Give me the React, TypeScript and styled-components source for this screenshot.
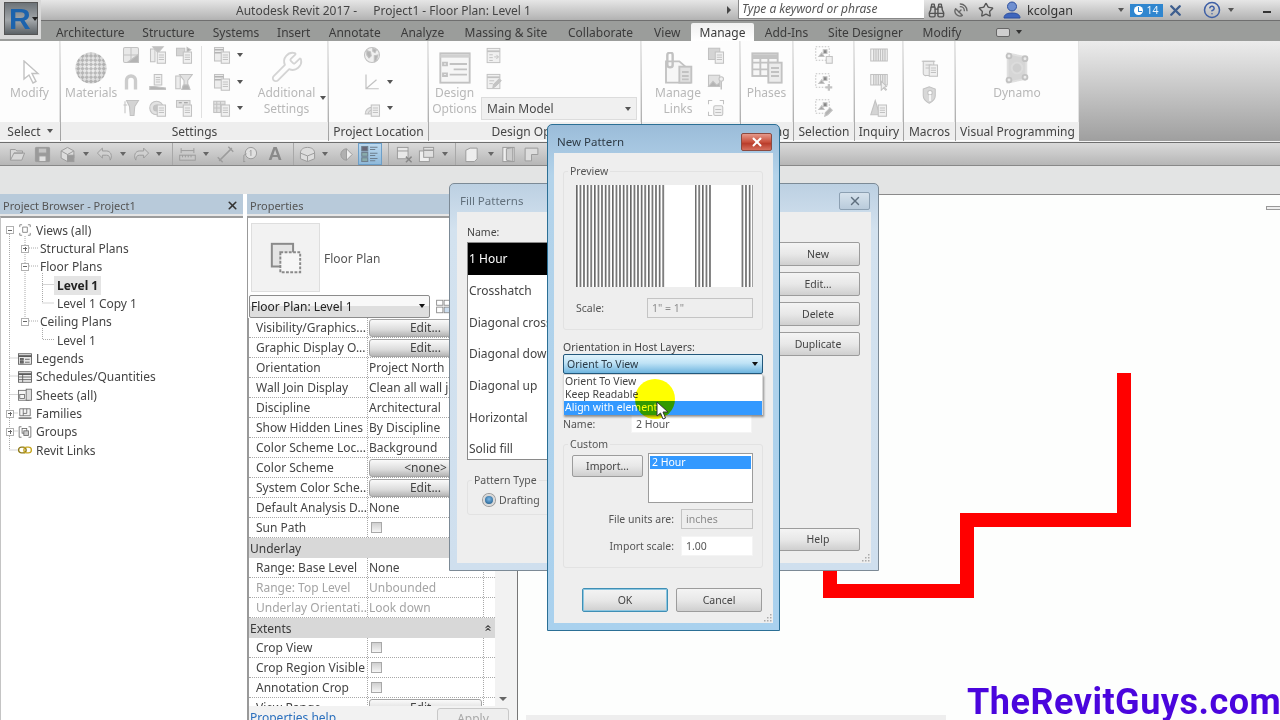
import React from 'react';
import styled, { createGlobalStyle } from 'styled-components';
import { Binoculars, ChevronsUp, CircleHelp, SatelliteDish, Star, Wrench, X } from 'lucide-react';

const GlobalStyle = createGlobalStyle`
  html, body { margin: 0; height: 100%; overflow: hidden; background: #fff; }
  body { font-family: "Noto Sans", "Open Sans", sans-serif; font-size: 12px; color: #3a3a3a; }
  * { box-sizing: border-box; }
`;

const Page = styled.div`
  position: relative;
  width: 1280px;
  height: 720px;
  display: flex;
  flex-direction: column;
  overflow: hidden;
`;

/* ---------- icons ---------- */

const GlyphSvg = styled.svg<{ $s: number; $c: string }>`
  width: ${(p) => p.$s}px;
  height: ${(p) => p.$s}px;
  flex: none;
  fill: none;
  stroke: ${(p) => p.$c};
  stroke-width: 1.4;
`;

const docMark = (
  <g>
    <rect x="11" y="8" width="11" height="15" fill="#f0f0f0" />
    <path d="M13 12h7M13 15h7M13 18h7" />
  </g>
);

const glyphs: Record<string, React.ReactNode> = {
  cursor: <path d="M6 1v18l5-4 4 8 3-1.5-4-8h6z" fill="#fff" />,
  objStyles: (
    <g>
      <rect x="2" y="2" width="20" height="20" rx="2" fill="#e8e8e8" />
      <path d="M2 12h20M12 2v20" />
      <path d="M7 22l15-11v11z" fill="#b4b4b4" />
    </g>
  ),
  funnelDoc: (
    <g>
      <rect x="2" y="4" width="6" height="17" fill="#ececec" />
      <path d="M5 1h14l-7 8z" fill="#c0c0c0" />
      {docMark}
    </g>
  ),
  copyDoc: (
    <g>
      <rect x="2" y="3" width="11" height="10" fill="#d4d4d4" />
      <path d="M16 2l5 3-5 3z" fill="#a8a8a8" />
      {docMark}
    </g>
  ),
  magnet: <path d="M6 22V10a6 6 0 0 1 12 0v12" strokeWidth="4.5" stroke="#cccccc" />,
  personDoc: (
    <g>
      <rect x="7" y="2" width="10" height="14" fill="#f0f0f0" />
      <path d="M9 6h6M9 9h6M9 12h6" />
      <path d="M1 22v-4h6l8 1 7 1v2z" fill="#b4b4b4" />
    </g>
  ),
  funnelBottle: (
    <g>
      <rect x="1" y="4" width="6" height="17" fill="#ececec" />
      <path d="M6 2h17l-6 8v6h-5v-6z" fill="#e2e2e2" />
      <path d="M11 16h7l2 6H9z" fill="#b4b4b4" />
    </g>
  ),
  funnelTube: (
    <g>
      <path d="M4 3v16M2 8h5" />
      <path d="M6 2h16l-5 8-1 12h-5l-1-12z" fill="#d4d4d4" />
    </g>
  ),
  discDoc: (
    <g>
      <circle cx="10" cy="12" r="9" fill="#e2e2e2" />
      <circle cx="10" cy="12" r="4" fill="#c4c4c4" />
      {docMark}
    </g>
  ),
  labelDoc: (
    <g>
      <rect x="2" y="2" width="18" height="9" fill="#e2e2e2" />
      <path d="M5 5h4M12 5h5" stroke="#999" />
      {docMark}
    </g>
  ),
  tableDoc: (
    <g>
      <rect x="2" y="2" width="12" height="18" fill="#ececec" />
      <path d="M2 5h12M2 9h12" stroke="#b4b4b4" strokeWidth="2" />
      {docMark}
    </g>
  ),
  calDoc: (
    <g>
      <rect x="1" y="3" width="15" height="15" fill="#e2e2e2" />
      <path d="M1 7h15M5 3v15M10 3v15M1 12h15" />
      {docMark}
    </g>
  ),
  globe: (
    <g>
      <circle cx="12" cy="12" r="10" fill="#f0f0f0" />
      <path d="M5 6l5 2 1 5-3 3-3-4zM13 3l5 2-2 4-3-2zM15 13l5-1-2 7-3 2z" fill="#b4b4b4" />
    </g>
  ),
  axes: <path d="M4 2v19h17M4 21L18 9" strokeWidth="1.6" />,
  dome: (
    <g>
      <path d="M3 20a9 9 0 0 1 18 0z" fill="#e4e4e4" />
      <path d="M7 20a5 5 0 0 1 10 0" />
      {docMark}
    </g>
  ),
  list: (
    <g>
      <rect x="1" y="1" width="22" height="22" fill="#f6f6f6" />
      <path d="M1 3h22" strokeWidth="2.5" stroke="#d0d0d0" />
      <path d="M3 8h3v2H3zM3 16h3v2H3z" />
      <path d="M8 9h13M11 13h10M8 17h13" />
    </g>
  ),
  arrowsPage: (
    <g>
      <rect x="3" y="2" width="18" height="20" fill="#f0f0f0" />
      <path d="M3 6h18" strokeWidth="2.5" />
      <path d="M6 11h5M6 15h5M6 19h5M13 14h6M16 11l3 3-3 3" />
    </g>
  ),
  pencilPage: (
    <g>
      <rect x="3" y="2" width="18" height="20" fill="#f0f0f0" />
      <path d="M3 6h18" strokeWidth="2.5" />
      <path d="M6 11h7M6 15h5" />
      <path d="M11 21l1-5 8-8 3 3-8 8z" fill="#c4c4c4" />
    </g>
  ),
  links: (
    <g>
      <path d="M3 7h10l8 7v9H3z" fill="#f6f6f6" />
      <path d="M4 2c0-2 4-2 4 0v8c0 2-4 2-4 0z" strokeWidth="1.8" />
      <rect x="13" y="11" width="9" height="12" fill="#e2e2e2" />
      <path d="M15 15h5M15 18h5M15 20.5h5" />
    </g>
  ),
  pictureDoc: (
    <g>
      <rect x="2" y="3" width="15" height="15" fill="#d4d4d4" />
      {docMark}
    </g>
  ),
  pinDoc: (
    <g>
      <rect x="2" y="3" width="15" height="15" fill="#e2e2e2" />
      <path d="M2 18l6-7 5 5 4-3v5z" fill="#b4b4b4" />
      <circle cx="19" cy="8" r="3" fill="#f0f0f0" />
      <path d="M19 11v11" strokeWidth="2" />
    </g>
  ),
  frameDoc: (
    <g>
      <path d="M2 7V2h5M17 2h5v5M2 17v5h5" />
      <rect x="9" y="9" width="12" height="13" rx="2" fill="#f0f0f0" />
      <path d="M11 14h8M11 18h8" />
    </g>
  ),
  phases: (
    <g>
      <rect x="1" y="1" width="19" height="17" fill="#f6f6f6" />
      <path d="M1 3.5h19" strokeWidth="3.5" stroke="#c4c4c4" />
      <path d="M1 8h19M1 13h19M7 5v13M13 5v13" />
      <rect x="13" y="8" width="10" height="15" fill="#ececec" />
      <path d="M15 12h6M15 15h6M15 18h6" />
    </g>
  ),
  selBox: (
    <g>
      <rect x="1" y="1" width="18" height="18" strokeDasharray="2 2" />
      <path d="M5 14l4-5 3 5z" fill="#a8a8a8" />
      <rect x="11" y="5" width="5" height="5" fill="#888" />
      <rect x="15" y="14" width="8" height="9" fill="#f0f0f0" />
    </g>
  ),
  selAdd: (
    <g>
      <rect x="1" y="1" width="18" height="18" strokeDasharray="2 2" />
      <path d="M5 14l4-5 3 5z" fill="#a8a8a8" />
      <rect x="11" y="5" width="5" height="5" fill="#888" />
      <path d="M14 19h9M18.5 14.5v9" strokeWidth="3" />
    </g>
  ),
  selEdit: (
    <g>
      <rect x="1" y="1" width="18" height="18" strokeDasharray="2 2" />
      <path d="M5 14l4-5 3 5z" fill="#a8a8a8" />
      <rect x="11" y="5" width="5" height="5" fill="#888" />
      <path d="M13 23l1-5 6-6 3 3-6 6z" fill="#b4b4b4" />
    </g>
  ),
  bars: (
    <g>
      <rect x="1" y="4" width="22" height="16" fill="#f4f4f4" />
      <path d="M5 4v16M8 4v16M11 4v16M14 4v16M17 4v16M20 4v16" strokeWidth="1.8" />
    </g>
  ),
  barsCursor: (
    <g>
      <rect x="1" y="2" width="22" height="14" fill="#f4f4f4" />
      <path d="M5 2v14M8 2v14M11 2v14M14 2v14M17 2v14M20 2v14" strokeWidth="1.8" />
      <path d="M15 11v12l3-3 3 3 1-1-3-3 3-1z" fill="#f0f0f0" />
    </g>
  ),
  warnDoc: (
    <g>
      <path d="M7 2L1 21h12z" fill="#d4d4d4" />
      {docMark}
    </g>
  ),
  scroll: (
    <g>
      <path d="M3 3h14v19H7a3 3 0 0 1-4-3z" fill="#ececec" />
      <path d="M1 3h18M6 8h8M6 12h8" />
      {docMark}
    </g>
  ),
  shield: (
    <g>
      <path d="M3 4l8-3 8 3v9c0 5-4 8-8 10-4-2-8-5-8-10z" fill="#d8d8d8" />
      <circle cx="12" cy="9" r="3" fill="#fff" />
      <path d="M12 12v8" stroke="#fff" strokeWidth="2" />
    </g>
  ),
  dynamo: (
    <g>
      <path d="M5 1l14 3v16L5 23z" fill="#d6d6d6" stroke="#e0e0e0" />
      <circle cx="6" cy="3" r="1.8" fill="#ececec" />
      <circle cx="18" cy="5" r="1.8" fill="#ececec" />
      <circle cx="18" cy="19" r="1.8" fill="#ececec" />
      <circle cx="6" cy="21" r="1.8" fill="#ececec" />
      <circle cx="12" cy="12" r="4" fill="#cfcfcf" stroke="#dcdcdc" />
    </g>
  ),
  openFolder: <path d="M2 20V5h7l2 2h8v3H7L2 20h16l4-10H7" fill="#d8d8d8" />,
  save: (
    <g>
      <rect x="2" y="2" width="20" height="20" rx="1" fill="#9a9a9a" />
      <rect x="6" y="3" width="12" height="7" fill="#c4c4c4" />
      <rect x="7" y="14" width="10" height="8" fill="#e0e0e0" />
    </g>
  ),
  syncCube: (
    <g>
      <path d="M12 2l9 5v10l-9 5-9-5V7z" fill="#dcdcdc" />
      <path d="M3 7l9 5 9-5M12 12v10" />
      <rect x="12" y="13" width="9" height="9" fill="#999" />
    </g>
  ),
  undo: <path d="M9 3L2 10l7 7v-4h6c3 0 5 2 5 7 2-3 2-6 1-9-1-2-3-4-6-4H9z" fill="#d0d0d0" />,
  redo: <path d="M15 3l7 7-7 7v-4H9c-3 0-5 2-5 7-2-3-2-6-1-9 1-2 3-4 6-4h6z" fill="#d0d0d0" />,
  measure: (
    <g>
      <path d="M3 3v7M21 3v7M3 6.5h18" />
      <rect x="1" y="13" width="22" height="7" fill="#c8c8c8" />
      <path d="M5 13v3M9 13v3M13 13v3M17 13v3" />
    </g>
  ),
  aligned: <path d="M3 21L21 3M1 16l7 7M16 1l7 7" strokeWidth="2" />,
  tagOne: (
    <g>
      <circle cx="14" cy="10" r="8" fill="#e0e0e0" />
      <path d="M4 22v-9l4-2M3 22h3" />
      <path d="M14 6v8M12.5 7.5L14 6" />
    </g>
  ),
  house3d: (
    <g>
      <path d="M12 2c6 0 10 3 10 8v8l-10 4-10-4v-8c0-5 4-8 10-8z" fill="#ddd" />
      <path d="M2 10l10 4 10-4M12 14v8" />
    </g>
  ),
  eye: (
    <g>
      <path d="M12 4l8 8-8 8-8-8z" fill="#eee" />
      <path d="M12 4a8 8 0 0 0 0 16z" fill="#b0b0b0" />
    </g>
  ),
  thinLines: (
    <g stroke="#6e7f8e">
      <rect x="1" y="2" width="8" height="6" fill="#667" />
      <path d="M12 3h10M12 6h7" />
      <rect x="1" y="10" width="8" height="5" fill="#8aa" />
      <path d="M12 11h10M12 14h7" />
      <rect x="1" y="17" width="8" height="5" fill="#8aa" />
      <path d="M12 18h10M12 21h7" />
    </g>
  ),
  closeHidden: (
    <g>
      <rect x="2" y="2" width="15" height="16" fill="#e8e8e8" />
      <path d="M2 7h15" />
      <path d="M14 15l8 8M22 15l-8 8" strokeWidth="2" stroke="#888" />
    </g>
  ),
  switchWin: (
    <g>
      <rect x="2" y="7" width="14" height="15" fill="#eee" />
      <rect x="8" y="2" width="14" height="14" fill="#e0e0e0" />
      <path d="M8 6h14" strokeWidth="2" />
    </g>
  ),
  wallShape: <path d="M4 6l6-3h10v15l-4 4H4z" fill="#eee" />,
  door: (
    <g>
      <rect x="4" y="2" width="16" height="20" fill="#eee" />
      <path d="M9 4l9-2v20l-9-2z" fill="#ccc" />
    </g>
  ),
  floorCorner: <path d="M3 3h18v9h-9v9H3z" fill="#ddd" />,
  treeViews: <path d="M3 7V3h4M17 3h4v4M3 17v4h4M17 21h4v-4M8 7h8v9H8z" stroke="#777" />,
  treeLegend: (
    <g stroke="#555">
      <rect x="1" y="3" width="22" height="18" fill="#e8e8e8" />
      <path d="M1 7h22" strokeWidth="3" />
      <rect x="4" y="11" width="5" height="3" fill="#777" />
      <rect x="4" y="16" width="5" height="3" fill="#777" />
      <path d="M12 12.5h8M12 17.5h8" />
    </g>
  ),
  treeSchedule: (
    <g stroke="#555">
      <rect x="1" y="3" width="22" height="18" fill="#eee" />
      <path d="M1 7h22" strokeWidth="3" />
      <path d="M1 12h22M1 16.5h22M8 7v14" />
    </g>
  ),
  treeSheet: (
    <g stroke="#666">
      <rect x="1" y="4" width="18" height="17" fill="#f4f4f4" />
      <rect x="3" y="11" width="8" height="7" />
      <rect x="14" y="2" width="9" height="19" fill="#ddd" />
    </g>
  ),
  treeFamily: (
    <g stroke="#666">
      <path d="M3 3h18v12H3z" fill="#f4f4f4" />
      <path d="M9 3v12M15 3v8H9" />
      <path d="M1 19h22" strokeWidth="2.5" />
    </g>
  ),
  treeGroup: (
    <g stroke="#666">
      <path d="M6 3H2v18h4M18 3h4v18h-4" />
      <rect x="7" y="6" width="8" height="8" />
      <rect x="10" y="10" width="8" height="8" fill="#ccc" />
    </g>
  ),
  treeLink: (
    <g>
      <rect x="1" y="7" width="13" height="10" rx="5" stroke="#8f7a16" strokeWidth="2.4" />
      <rect x="10" y="7" width="13" height="10" rx="5" stroke="#c7a722" strokeWidth="2.4" />
    </g>
  ),
  typePlan: (
    <g stroke="#8a8a8a">
      <rect x="2" y="2" width="15" height="16" fill="#e4e4e4" />
      <rect x="8" y="8" width="14" height="14" fill="#f6f6f6" strokeDasharray="2 1" />
    </g>
  ),
  typeSwitch: (
    <g stroke="#888">
      <rect x="1" y="2" width="10" height="8" />
      <rect x="13" y="2" width="10" height="8" />
      <rect x="1" y="13" width="10" height="9" />
      <rect x="13" y="13" width="10" height="9" fill="#cde" />
    </g>
  ),
};

const Glyph = ({ name, size = 18, color = '#c2c2c2' }: { name: string; size?: number; color?: string }) => (
  <GlyphSvg viewBox="0 0 24 24" $s={size} $c={color}>
    {glyphs[name]}
  </GlyphSvg>
);

const Caret = styled.span<{ $c?: string }>`
  flex: none;
  width: 0;
  height: 0;
  border-left: 3px solid transparent;
  border-right: 3px solid transparent;
  border-top: 4px solid ${(p) => p.$c || '#555'};
`;

/* ---------- title bar ---------- */

const TitleBar = styled.div`
  height: 20px;
  display: flex;
  align-items: center;
  padding-left: 236px;
  background: linear-gradient(#e6e6e6, #b2b2b2);
  color: #444;
  white-space: nowrap;
`;

const TitleGap = styled.span`
  margin-left: 16px;
`;

const TopTools = styled.div`
  position: absolute;
  left: 726px;
  top: 0;
  height: 20px;
  display: flex;
  align-items: center;
`;

const TopSlot = styled.div<{ $left: number }>`
  margin-left: ${(p) => p.$left}px;
  display: flex;
  align-items: center;
`;

const SearchArrow = styled.span`
  width: 0;
  height: 0;
  border-top: 4px solid transparent;
  border-bottom: 4px solid transparent;
  border-left: 4px solid #444;
`;

const SearchBox = styled.div`
  width: 186px;
  height: 19px;
  margin-top: -2px;
  padding: 0 3px;
  background: #fff;
  border-left: 1px solid #888;
  border-bottom: 1px solid #888;
  font-style: italic;
  font-size: 12px;
  line-height: 18px;
  color: #555;
`;

const UserName = styled.span`
  color: #333;
  font-size: 12.5px;
`;

const UserIcon = styled.svg`
  width: 18px;
  height: 18px;
`;

const ClockBadge = styled.div`
  width: 33px;
  height: 13px;
  display: flex;
  align-items: center;
  justify-content: center;
  gap: 3px;
  background: #2f86cf;
  color: #eaf4fc;
  font-size: 10.5px;
`;

const ClockDot = styled.span`
  position: relative;
  width: 9px;
  height: 9px;
  border-radius: 50%;
  background: #fff;
  &::after {
    content: '';
    position: absolute;
    left: 4px;
    top: 1px;
    width: 3px;
    height: 4px;
    border-left: 1px solid #2f86cf;
    border-bottom: 1px solid #2f86cf;
  }
`;

const Minimize = styled.span`
  width: 8px;
  height: 2px;
  margin-top: 3px;
  background: #333;
`;

const AppButton = styled.div`
  position: absolute;
  left: 0;
  top: 0;
  width: 41px;
  height: 39px;
  padding: 2px 3px 4px 4px;
  background: #d8d8d8;
  z-index: 2;
`;

const AppButtonFace = styled.div`
  height: 100%;
  display: flex;
  align-items: center;
  padding-left: 4px;
  gap: 1px;
  background: linear-gradient(#6d7378, #a3a7aa 55%, #5c6266);
  border: 1px solid #555;
  color: #1c63ad;
  font-family: "Liberation Sans", sans-serif;
  font-weight: 700;
  font-size: 30px;
`;

/* ---------- ribbon ---------- */

const TabRow = styled.div`
  height: 21px;
  display: flex;
  padding-left: 47px;
  border-top: 1px solid #6f6f6f;
  background: #9b9d9b;
`;

const Tab = styled.div<{ $w: number; $active?: boolean }>`
  width: ${(p) => p.$w}px;
  padding-top: 2px;
  display: flex;
  align-items: center;
  justify-content: center;
  white-space: nowrap;
  color: #3b3b3b;
  ${(p) => p.$active && 'background: linear-gradient(#f0f0f0, #fff); margin-top: 2px; padding-top: 0; border-radius: 2px 2px 0 0;'}
`;

const CollapseTab = styled(Tab)`
  gap: 6px;
  justify-content: flex-start;
  padding-left: 24px;
`;

const MiniKey = styled.span`
  width: 14px;
  height: 9px;
  border: 1px solid #666;
  border-radius: 2px;
  background: #cfcfcf;
`;

const Ribbon = styled.div`
  height: 100px;
  display: flex;
  background: linear-gradient(#ececec, #9f9f9f);
`;

const RibbonPanel = styled.div<{ $w: number }>`
  width: ${(p) => p.$w}px;
  margin-right: 1px;
  display: flex;
  flex-direction: column;
  background: #fdfdfd;
`;

const PanelBody = styled.div<{ $pad?: number }>`
  height: 81px;
  display: flex;
  padding-left: ${(p) => p.$pad || 0}px;
  border-right: 1px solid #e2e2e2;
`;

const PanelLabel = styled.div`
  height: 18px;
  display: flex;
  align-items: center;
  justify-content: center;
  gap: 6px;
  background: #eeeeee;
  color: #444;
  white-space: nowrap;
`;

const LargeTool = styled.div<{ $w: number; $left?: number }>`
  width: ${(p) => p.$w}px;
  margin-left: ${(p) => p.$left || 0}px;
  position: relative;
  display: grid;
  grid-template-rows: 43px 16.5px 16.5px;
  justify-items: center;
  align-items: center;
  color: #b8b8b8;
  white-space: nowrap;
`;

const LargeIcon = styled.div`
  display: flex;
  align-self: end;
`;

const ToolCaret = styled.span`
  position: absolute;
  right: -4px;
  top: 55px;
  display: flex;
`;

const ToolGrid = styled.div<{ $cols: number; $cell: number; $left?: number; $top?: number }>`
  display: grid;
  margin-left: ${(p) => p.$left || 0}px;
  padding-top: ${(p) => p.$top || 1}px;
  grid-template-columns: repeat(${(p) => p.$cols}, ${(p) => p.$cell}px);
  grid-auto-rows: 26.5px;
  justify-items: center;
  align-items: center;
`;

const CaretTool = styled.div`
  display: flex;
  align-items: center;
  gap: 6px;
`;

const PanelDivider = styled.div<{ $left: number }>`
  width: 1px;
  height: 72px;
  margin: 5px 0 0 ${(p) => p.$left}px;
  background: #e0e0e0;
`;

const DesignColumn = styled.div`
  width: 156px;
  margin-left: 1px;
`;

const DesignSelect = styled.div`
  height: 23px;
  margin-top: 2px;
  display: flex;
  align-items: center;
  justify-content: space-between;
  padding: 0 5px;
  background: #f0f0f0;
  border: 1px solid #dcdcdc;
  color: #4a4a4a;
`;

const MaterialBall = () => (
  <svg width="32" height="32" viewBox="0 0 32 32">
    <defs>
      <pattern id="checks" width="6" height="6" patternUnits="userSpaceOnUse" patternTransform="rotate(45 16 16)">
        <rect width="6" height="6" fill="#ececec" />
        <rect width="3" height="3" fill="#b4b4b4" />
        <rect x="3" y="3" width="3" height="3" fill="#b4b4b4" />
      </pattern>
      <radialGradient id="ballShade" cx="0.5" cy="0.5" r="0.5">
        <stop offset="0" stopColor="#fff" stopOpacity="0.1" />
        <stop offset="1" stopColor="#999" stopOpacity="0.25" />
      </radialGradient>
    </defs>
    <circle cx="16" cy="16" r="15.5" fill="url(#checks)" />
    <circle cx="16" cy="16" r="15.5" fill="url(#ballShade)" />
  </svg>
);

/* ---------- quick access ---------- */

const RibbonEdge = styled.div`
  height: 2px;
  background: #f4f4f4;
  border-bottom: 1px solid #6e6e6e;
`;

const QatBar = styled.div`
  height: 23px;
  display: flex;
  align-items: stretch;
  padding-left: 6px;
  background: linear-gradient(#dadada, #b6b6b6);
  border-bottom: 1px solid #888;
`;

const QatSlot = styled.div<{ $w: number; $active?: boolean }>`
  width: ${(p) => p.$w}px;
  display: flex;
  align-items: center;
  justify-content: center;
  ${(p) => p.$active && 'background: linear-gradient(#bcd9ef, #8fb9da); border: 1px solid #6d9fc8;'}
`;

const QatSeparator = styled.span`
  width: 1px;
  height: 100%;
  background: #a8a8a8;
`;

const Letter = styled.span`
  font-family: "Liberation Sans", sans-serif;
  font-weight: 700;
  font-size: 19px;
  color: #8a8a8a;
`;

const GrayStrip = styled.div`
  height: 28px;
  background: #e3e4e4;
`;

/* ---------- work area ---------- */

const WorkArea = styled.div`
  flex: 1;
  min-height: 0;
  display: flex;
`;

const DockTitle = styled.div`
  height: 22px;
  flex: none;
  display: flex;
  align-items: center;
  justify-content: space-between;
  padding: 2px 4px 0 3px;
  font-size: 11px;
  background: #b8cada;
  color: #555;
  white-space: nowrap;
  border-bottom: 2px solid #e6e6e6;
`;

const BrowserDock = styled.div`
  width: 243px;
  display: flex;
  flex-direction: column;
  margin-right: 4px;
`;

const TreePane = styled.div`
  position: relative;
  flex: 1;
  padding-top: 3px;
  background: #fff;
  border-top: 2px solid #9c9c9c;
  border-left: 1px solid #c4c4c4;
`;

const TreeLines = styled.svg`
  position: absolute;
  left: -1px;
  top: -2px;
  width: 60px;
  height: 260px;
  fill: none;
  stroke: #aaa;
  stroke-dasharray: 1 1;
`;

const TreeRow = styled.div<{ $indent: number }>`
  position: relative;
  height: 18.35px;
  display: flex;
  align-items: center;
  padding-left: ${(p) => p.$indent}px;
  color: #444;
  white-space: nowrap;
`;

const Toggle = styled.span<{ $open?: boolean; $none?: boolean }>`
  position: relative;
  flex: none;
  width: 8px;
  height: 8px;
  margin-right: 4px;
  background: #fff;
  border: 1px solid #b0b0b0;
  visibility: ${(p) => (p.$none ? 'hidden' : 'visible')};
  &::before {
    content: '';
    position: absolute;
    left: 1px;
    top: 2.5px;
    width: 4px;
    height: 1px;
    background: #666;
  }
  &::after {
    content: '';
    display: ${(p) => (p.$open ? 'none' : 'block')};
    position: absolute;
    left: 2.5px;
    top: 1px;
    width: 1px;
    height: 4px;
    background: #666;
  }
`;

const TreeIcon = styled.span`
  display: flex;
  margin-right: 4px;
`;

const TreeText = styled.span<{ $left?: number; $current?: boolean }>`
  margin-left: ${(p) => p.$left || 0}px;
  ${(p) => p.$current && 'font-weight: 700; color: #222; background: #e4e4e4; padding: 1px 3px; margin-left: -3px;'}
`;

const PropertiesDock = styled.div`
  width: 271px;
  display: flex;
  flex-direction: column;
  border-right: 1px solid #777;
`;

const TypeArea = styled.div`
  height: 78px;
  flex: none;
  display: flex;
  align-items: flex-start;
  gap: 4px;
  padding: 5px 0 0 3px;
  border-top: 2px solid #9c9c9c;
  border-left: 1px solid #999;
  background: #fff;
`;

const TypeThumb = styled.div`
  width: 69px;
  height: 69px;
  display: flex;
  align-items: center;
  justify-content: center;
  background: #f2f2f2;
  border: 1px solid #dedede;
`;

const TypeName = styled.span`
  margin-top: 27px;
  color: #555;
`;

const TypeSelectRow = styled.div`
  height: 24px;
  flex: none;
  display: flex;
  align-items: center;
  gap: 6px;
  padding-left: 1px;
  border-left: 1px solid #999;
  background: #fff;
`;

const TypeSelect = styled.div`
  width: 181px;
  height: 23px;
  display: flex;
  align-items: center;
  justify-content: space-between;
  padding: 0 4px 0 1px;
  background: linear-gradient(#f8f8f8 50%, #dedede 50%);
  border: 1px solid #8c8c8c;
  border-radius: 2px;
  color: #222;
`;

const PropBody = styled.div`
  flex: 1;
  min-height: 0;
  display: flex;
  border-left: 2px solid #999;
  background: #f2f2f2;
`;

const PropTable = styled.div`
  width: 246px;
  overflow: hidden;
  background: #fff;
`;

const PropRow = styled.div<{ $muted?: boolean }>`
  height: 20px;
  display: grid;
  grid-template-columns: 119px 116px 11px;
  align-items: center;
  border-bottom: 1px dotted #a8a8a8;
  color: ${(p) => (p.$muted ? '#a4a4a4' : '#444')};
  white-space: nowrap;
`;

const PropLabel = styled.span`
  height: 100%;
  padding-left: 7px;
  line-height: 19px;
  overflow: hidden;
  border-right: 1px dotted #a8a8a8;
`;

const PropValue = styled.span`
  height: 100%;
  padding-left: 1px;
  display: flex;
  align-items: center;
  overflow: hidden;
  border-right: 1px dotted #a8a8a8;
`;

const PropButton = styled.div`
  width: 113px;
  height: 18px;
  display: flex;
  align-items: center;
  justify-content: center;
  background: linear-gradient(#fafafa, #dcdcdc 60%, #b4b4b4);
  border: 1px solid #a4a4a4;
  border-radius: 3px;
  color: #444;
`;

const CheckBox = styled.span`
  width: 11px;
  height: 11px;
  margin-left: 2px;
  background: linear-gradient(#cfcfcf, #f6f6f6);
  border: 1px solid #a8a8a8;
`;

const GroupHead = styled.div`
  height: 20px;
  display: flex;
  align-items: center;
  justify-content: space-between;
  padding: 0 2px 0 1px;
  background: #d8d8d8;
  color: #3a3a3a;
`;

const PropScroll = styled.div`
  flex: 1;
  position: relative;
`;

const ScrollArrow = styled.span`
  position: absolute;
  left: 4px;
  bottom: 5px;
  width: 0;
  height: 0;
  border-left: 4px solid transparent;
  border-right: 4px solid transparent;
  border-top: 4px solid #666;
`;

const PropFooter = styled.div`
  height: 14px;
  flex: none;
  display: flex;
  align-items: flex-start;
  justify-content: space-between;
  padding: 5px 8px 0 1px;
  border-left: 2px solid #999;
  background: #f2f2f2;
`;

const HelpLink = styled.span`
  color: #2a6fbd;
  line-height: 14px;
`;

const ApplyButton = styled.div`
  width: 72px;
  height: 24px;
  margin-top: -3px;
  text-align: center;
  line-height: 20px;
  color: #a8a8a8;
  background: #eee;
  border: 1px solid #c8c8c8;
  border-radius: 3px;
`;

const Canvas = styled.div`
  position: relative;
  flex: 1;
  background: #fdfefd;
  box-shadow: inset 0 1px 0 #8a8a8a;
`;

const WallDrawing = styled.svg`
  position: absolute;
  left: 0;
  top: 0;
  width: 762px;
  height: 526px;
`;

const ElevationMark = styled.span`
  position: absolute;
  right: 0;
  top: 12px;
  width: 14px;
  height: 4px;
  border: 1px solid #999;
  border-right: none;
  background: #eee;
`;

const ViewBar = styled.div`
  position: absolute;
  left: 8px;
  bottom: 0;
  width: 420px;
  height: 5px;
  background: #eeeeee;
`;

const Watermark = styled.div`
  position: absolute;
  left: 967px;
  bottom: -2px;
  font-family: Roboto, "Noto Sans", sans-serif;
  font-weight: 700;
  font-size: 36px;
  line-height: 40px;
  letter-spacing: 0.5px;
  white-space: nowrap;
  color: #4a05dd;
  z-index: 8;
`;

/* ---------- dialogs ---------- */

const FillDialog = styled.div`
  position: absolute;
  left: 449px;
  top: 183px;
  width: 430px;
  height: 388px;
  display: flex;
  flex-direction: column;
  padding: 0 7px 7px;
  background: linear-gradient(#bcd0e2, #d3e2ef 12%, #cfdfee);
  border: 1px solid #7c8a96;
  border-radius: 5px 5px 0 0;
  z-index: 3;
`;

const NewDialog = styled.div`
  position: absolute;
  left: 547px;
  top: 124px;
  width: 233px;
  height: 507px;
  display: flex;
  flex-direction: column;
  padding: 0 6px 7px;
  background: linear-gradient(#9bbcd9, #b3d3ea 10%, #a9d1ee);
  border: 1px solid #2b6f95;
  border-radius: 5px 5px 0 0;
  z-index: 4;
`;

const DialogTitle = styled.div<{ $dim?: boolean }>`
  height: 28px;
  flex: none;
  display: flex;
  align-items: center;
  justify-content: space-between;
  padding: 5px 1px 0 3px;
  font-size: 11.5px;
  color: ${(p) => (p.$dim ? '#62707c' : '#2e3b46')};
`;

const CloseButton = styled.div<{ $red?: boolean }>`
  width: 31px;
  height: 18px;
  display: flex;
  align-items: center;
  justify-content: center;
  border: 1px solid ${(p) => (p.$red ? '#8c4a40' : '#8ca0b2')};
  border-radius: 2px;
  background: ${(p) => (p.$red ? 'linear-gradient(#e5998b, #c9503c 50%, #b93d2b 60%, #d6705e)' : 'linear-gradient(#d6e2ec, #b9cbdb)')};
`;

const DialogFace = styled.div`
  position: relative;
  flex: 1;
  min-height: 0;
  display: flex;
  background: #eeeeee;
`;

const FillColumn = styled.div`
  width: 200px;
  padding: 13px 0 0 10px;
`;

const FieldLabel = styled.div`
  line-height: 14px;
  font-size: 10.5px;
  color: #444;
  white-space: nowrap;
`;

const PatternList = styled.div`
  height: 218px;
  margin-top: 3px;
  background: #fff;
  border: 1px solid #8a8a8a;
  overflow: hidden;
`;

const PatternItem = styled.div<{ $selected?: boolean }>`
  height: 31.7px;
  display: flex;
  align-items: center;
  padding-left: 1px;
  white-space: nowrap;
  color: ${(p) => (p.$selected ? '#fff' : '#444')};
  background: ${(p) => (p.$selected ? '#000' : 'transparent')};
`;

const GroupBox = styled.div<{ $h: number }>`
  position: relative;
  height: ${(p) => p.$h}px;
  border: 1px solid #e2e2e2;
  border-radius: 3px;
`;

const GroupLegend = styled.span`
  position: absolute;
  left: 4px;
  top: -8px;
  padding: 0 2px;
  font-size: 10.5px;
  line-height: 14px;
  background: #eeeeee;
  color: #555;
`;

const PatternTypeBox = styled(GroupBox)`
  margin-top: 20px;
  display: flex;
  align-items: center;
  padding: 5px 0 0 15px;
  gap: 4px;
  font-size: 10.5px;
  color: #555;
`;

const Radio = styled.span`
  width: 12px;
  height: 12px;
  border-radius: 50%;
  border: 2px solid #d8d8d8;
  background: radial-gradient(circle at 50% 40%, #7db9e8, #13507f);
  box-shadow: 0 0 0 1px #999;
`;

const FillActions = styled.div`
  width: 84px;
  margin-left: auto;
  margin-right: 11px;
  padding: 30px 0 12px;
  display: flex;
  flex-direction: column;
  gap: 6.5px;
`;

const PushButton = styled.div<{ $w?: number; $h?: number; $default?: boolean }>`
  width: ${(p) => (p.$w ? `${p.$w}px` : '100%')};
  height: ${(p) => p.$h || 23.5}px;
  flex: none;
  display: flex;
  align-items: center;
  justify-content: center;
  font-size: 10.5px;
  color: #444;
  background: linear-gradient(#f4f4f4, #e8e8e8 50%, #cfcfcf);
  border: 1px solid ${(p) => (p.$default ? '#3f8fb5' : '#9c9c9c')};
  border-radius: 2px;
  ${(p) => p.$default && 'box-shadow: inset 0 0 0 1px #8cc6e0;'}
`;

const HelpButton = styled(PushButton)`
  margin-top: auto;
`;

const ResizeGrip = styled.svg`
  position: absolute;
  right: 1px;
  bottom: 1px;
  width: 9px;
  height: 9px;
  fill: #aaa;
`;

const NewColumn = styled.div`
  width: 100%;
  padding: 18px 10px 0 9px;
`;

const PreviewBox = styled(GroupBox)`
  padding: 13px 0 0 12px;
`;

const PatternPreview = styled.svg`
  display: block;
  width: 177px;
  height: 102px;
`;

const ScaleRow = styled.div`
  margin-top: 11px;
  display: flex;
  align-items: center;
  font-size: 10.5px;
  color: #555;
`;

const ScaleLabel = styled.span`
  width: 71px;
`;

const TextField = styled.div<{ $w: number; $h?: number; $disabled?: boolean }>`
  width: ${(p) => p.$w}px;
  height: ${(p) => p.$h || 20}px;
  padding-left: 4px;
  display: flex;
  align-items: center;
  font-size: 10.5px;
  color: ${(p) => (p.$disabled ? '#8c8c8c' : '#555')};
  background: ${(p) => (p.$disabled ? '#eee' : '#fff')};
  border: 1px solid ${(p) => (p.$disabled ? '#c4c4c4' : '#f4f4f4')};
`;

const OrientLabel = styled(FieldLabel)`
  margin-top: 10px;
`;

const OrientSelect = styled.div`
  height: 20px;
  display: flex;
  align-items: center;
  justify-content: space-between;
  padding: 0 4px 0 3px;
  font-size: 10.5px;
  color: #2a3a46;
  background: linear-gradient(#e0f3fc, #bfe3f6 45%, #6fb5df);
  border: 1px solid #22587c;
  border-radius: 2px;
`;

const OrientMenu = styled.div`
  position: absolute;
  left: 9px;
  top: 221px;
  width: 200px;
  height: 41px;
  background: #fff;
  border: 1px solid #d8d8d8;
  box-shadow: 1px 2px 2px rgba(0, 0, 0, 0.4);
  font-size: 10.5px;
  z-index: 1;
`;

const OrientOption = styled.div<{ $selected?: boolean }>`
  height: 13.2px;
  padding-left: 1px;
  line-height: 13px;
  color: ${(p) => (p.$selected ? '#fff' : '#444')};
  background: ${(p) => (p.$selected ? '#3399ff' : 'transparent')};
`;

const NameRow = styled.div`
  margin-top: 41px;
  display: flex;
  align-items: center;
  font-size: 10.5px;
  color: #555;
`;

const NameLabel = styled.span`
  width: 68px;
`;

const CustomBox = styled(GroupBox)`
  margin-top: 11px;
  padding: 10px 9px 0 8px;
`;

const ImportRow = styled.div`
  display: flex;
  align-items: flex-start;
  gap: 5px;
  margin-bottom: -1px;
`;

const ImportList = styled.div`
  width: 105px;
  height: 50px;
  margin-top: -2px;
  padding: 2px 1px 1px;
  background: #fff;
  border: 1px solid #9c9c9c;
  font-size: 10.5px;
`;

const ImportItem = styled.div`
  height: 13px;
  padding-left: 2px;
  line-height: 13px;
  color: #fff;
  background: #3399ff;
`;

const UnitRow = styled.div`
  margin-top: 7px;
  display: flex;
  align-items: center;
  justify-content: flex-end;
  gap: 7px;
  font-size: 10.5px;
  color: #555;
`;

const DialogActions = styled.div`
  margin-top: 20px;
  display: flex;
  justify-content: flex-end;
  gap: 8px;
  padding-right: 1px;
`;

const Highlight = styled.div`
  position: absolute;
  left: 635px;
  top: 379px;
  width: 40px;
  height: 40px;
  border-radius: 50%;
  background: #ffff00;
  mix-blend-mode: multiply;
  z-index: 6;
`;

const MouseCursor = styled.svg`
  position: absolute;
  left: 656px;
  top: 401px;
  width: 13px;
  height: 19px;
  z-index: 7;
`;

/* ---------- data ---------- */

const tabs: [string, number][] = [
  ['Architecture', 86.5],
  ['Structure', 70],
  ['Systems', 65],
  ['Insert', 50.5],
  ['Annotate', 71.5],
  ['Analyze', 64],
  ['Massing & Site', 103],
  ['Collaborate', 86],
  ['View', 47.5],
  ['Manage', 63],
  ['Add-Ins', 65],
  ['Site Designer', 93],
  ['Modify', 60],
];

const treeRows = [
  { indent: 5, toggle: 'open', icon: 'treeViews', text: 'Views (all)' },
  { indent: 20, toggle: 'closed', text: 'Structural Plans', left: 7 },
  { indent: 20, toggle: 'open', text: 'Floor Plans', left: 7 },
  { indent: 56, text: 'Level 1', current: true },
  { indent: 56, text: 'Level 1 Copy 1' },
  { indent: 20, toggle: 'open', text: 'Ceiling Plans', left: 7 },
  { indent: 56, text: 'Level 1' },
  { indent: 5, toggle: 'none', icon: 'treeLegend', text: 'Legends' },
  { indent: 5, toggle: 'none', icon: 'treeSchedule', text: 'Schedules/Quantities' },
  { indent: 5, toggle: 'none', icon: 'treeSheet', text: 'Sheets (all)' },
  { indent: 5, toggle: 'closed', icon: 'treeFamily', text: 'Families' },
  { indent: 5, toggle: 'closed', icon: 'treeGroup', text: 'Groups' },
  { indent: 5, toggle: 'none', icon: 'treeLink', text: 'Revit Links' },
];

type Prop =
  | { head: string; chevron?: boolean }
  | { label: string; value?: string; button?: string; check?: boolean; muted?: boolean };

const props: Prop[] = [
  { label: 'Visibility/Graphics...', button: 'Edit...' },
  { label: 'Graphic Display O...', button: 'Edit...' },
  { label: 'Orientation', value: 'Project North' },
  { label: 'Wall Join Display', value: 'Clean all wall joins' },
  { label: 'Discipline', value: 'Architectural' },
  { label: 'Show Hidden Lines', value: 'By Discipline' },
  { label: 'Color Scheme Loc...', value: 'Background' },
  { label: 'Color Scheme', button: '<none>' },
  { label: 'System Color Sche...', button: 'Edit...' },
  { label: 'Default Analysis D...', value: 'None' },
  { label: 'Sun Path', check: true },
  { head: 'Underlay' },
  { label: 'Range: Base Level', value: 'None' },
  { label: 'Range: Top Level', value: 'Unbounded', muted: true },
  { label: 'Underlay Orientati...', value: 'Look down', muted: true },
  { head: 'Extents', chevron: true },
  { label: 'Crop View', check: true },
  { label: 'Crop Region Visible', check: true },
  { label: 'Annotation Crop', check: true },
  { label: 'View Range', button: 'Edit...' },
];

const patterns = ['1 Hour', 'Crosshatch', 'Diagonal crosshatch', 'Diagonal down', 'Diagonal up', 'Horizontal', 'Solid fill'];

const qat: { w: number; icon?: string; caret?: boolean; sep?: boolean; active?: boolean; letter?: boolean }[] = [
  { w: 23, icon: 'openFolder' },
  { w: 26, icon: 'save' },
  { w: 24, icon: 'syncCube' },
  { w: 14, caret: true },
  { w: 22, icon: 'undo' },
  { w: 16, caret: true },
  { w: 20, icon: 'redo' },
  { w: 16, caret: true },
  { w: 10, sep: true },
  { w: 21, icon: 'measure' },
  { w: 16, caret: true },
  { w: 22, icon: 'aligned' },
  { w: 26, icon: 'tagOne' },
  { w: 26, letter: true },
  { w: 10, sep: true },
  { w: 18, icon: 'house3d' },
  { w: 18, caret: true },
  { w: 24, icon: 'eye' },
  { w: 24, icon: 'thinLines', active: true },
  { w: 12, sep: true },
  { w: 20, icon: 'closeHidden' },
  { w: 24, icon: 'switchWin' },
  { w: 13, caret: true },
  { w: 8, sep: true },
  { w: 24, icon: 'wallShape' },
  { w: 16, caret: true },
  { w: 18, icon: 'door' },
  { w: 28, icon: 'floorCorner' },
];

const Grip = () => (
  <ResizeGrip viewBox="0 0 9 9">
    <rect x="7" y="1" width="1.5" height="1.5" />
    <rect x="7" y="4" width="1.5" height="1.5" />
    <rect x="4" y="4" width="1.5" height="1.5" />
    <rect x="7" y="7" width="1.5" height="1.5" />
    <rect x="4" y="7" width="1.5" height="1.5" />
    <rect x="1" y="7" width="1.5" height="1.5" />
  </ResizeGrip>
);

const App = () => (
  <Page>
    <GlobalStyle />

    <TitleBar>
      Autodesk Revit 2017 -<TitleGap>Project1 - Floor Plan: Level 1</TitleGap>
    </TitleBar>
    <TopTools>
      <TopSlot $left={1}>
        <SearchArrow />
      </TopSlot>
      <TopSlot $left={7}>
        <SearchBox>Type a keyword or phrase</SearchBox>
      </TopSlot>
      <TopSlot $left={4}>
        <Binoculars size={17} color="#555" />
      </TopSlot>
      <TopSlot $left={8}>
        <SatelliteDish size={16} color="#666" />
      </TopSlot>
      <TopSlot $left={9}>
        <Star size={16} color="#555" />
      </TopSlot>
      <TopSlot $left={9}>
        <UserIcon viewBox="0 0 18 18">
          <circle cx="9" cy="5.5" r="4.5" fill="#6f8fd0" stroke="#2d4f9e" />
          <path d="M1 17c0-4 4-5 8-5s8 1 8 5z" fill="#3f66bd" stroke="#2d4f9e" />
        </UserIcon>
      </TopSlot>
      <TopSlot $left={6}>
        <UserName>kcolgan</UserName>
      </TopSlot>
      <TopSlot $left={45}>
        <Caret />
      </TopSlot>
      <TopSlot $left={6}>
        <ClockBadge>
          <ClockDot />
          14
        </ClockBadge>
      </TopSlot>
      <TopSlot $left={4}>
        <X size={17} color="#3f5f8f" strokeWidth={3.4} />
      </TopSlot>
      <TopSlot $left={19}>
        <CircleHelp size={18} color="#3e5fa5" />
      </TopSlot>
      <TopSlot $left={7}>
        <Caret />
      </TopSlot>
      <TopSlot $left={29}>
        <Minimize />
      </TopSlot>
    </TopTools>
    <AppButton>
      <AppButtonFace>
        R
        <Caret $c="#222" />
      </AppButtonFace>
    </AppButton>

    <TabRow>
      {tabs.map(([name, w]) => (
        <Tab key={name} $w={w} $active={name === 'Manage'}>
          {name}
        </Tab>
      ))}
      <CollapseTab $w={70}>
        <MiniKey />
        <Caret $c="#333" />
      </CollapseTab>
    </TabRow>

    <Ribbon>
      <RibbonPanel $w={60}>
        <PanelBody>
          <LargeTool $w={60}>
            <LargeIcon>
              <Glyph name="cursor" size={24} />
            </LargeIcon>
            <span>Modify</span>
          </LargeTool>
        </PanelBody>
        <PanelLabel>
          Select <Caret />
        </PanelLabel>
      </RibbonPanel>

      <RibbonPanel $w={267}>
        <PanelBody $pad={4}>
          <LargeTool $w={51}>
            <LargeIcon>
              <MaterialBall />
            </LargeIcon>
            <span>Materials</span>
          </LargeTool>
          <ToolGrid $cols={3} $cell={26.5} $left={2}>
            {['objStyles', 'funnelDoc', 'copyDoc', 'magnet', 'personDoc', 'funnelBottle', 'funnelTube', 'discDoc', 'labelDoc'].map((n) => (
              <Glyph key={n} name={n} />
            ))}
          </ToolGrid>
          <PanelDivider $left={3} />
          <ToolGrid $cols={1} $cell={40} $left={6}>
            {['tableDoc', 'tableDoc', 'calDoc'].map((n, i) => (
              <CaretTool key={i}>
                <Glyph name={n} />
                <Caret />
              </CaretTool>
            ))}
          </ToolGrid>
          <LargeTool $w={70} $left={4}>
            <LargeIcon>
              <Wrench size={34} color="#d4d4d4" strokeWidth={1.3} />
            </LargeIcon>
            <span>Additional</span>
            <span>Settings</span>
            <ToolCaret>
              <Caret />
            </ToolCaret>
          </LargeTool>
        </PanelBody>
        <PanelLabel>Settings</PanelLabel>
      </RibbonPanel>

      <RibbonPanel $w={99}>
        <PanelBody $pad={29}>
          <ToolGrid $cols={1} $cell={40}>
            {['globe', 'axes', 'dome'].map((n) => (
              <CaretTool key={n}>
                <Glyph name={n} />
                {n === 'globe' ? <Caret $c="transparent" /> : <Caret />}
              </CaretTool>
            ))}
          </ToolGrid>
        </PanelBody>
        <PanelLabel>Project Location</PanelLabel>
      </RibbonPanel>

      <RibbonPanel $w={212}>
        <PanelBody>
          <LargeTool $w={51}>
            <LargeIcon>
              <Glyph name="list" size={32} />
            </LargeIcon>
            <span>Design</span>
            <span>Options</span>
          </LargeTool>
          <DesignColumn>
            <ToolGrid $cols={1} $cell={24}>
              <Glyph name="arrowsPage" size={17} />
              <Glyph name="pencilPage" size={17} />
            </ToolGrid>
            <DesignSelect>
              Main Model
              <Caret />
            </DesignSelect>
          </DesignColumn>
        </PanelBody>
        <PanelLabel>Design Options</PanelLabel>
      </RibbonPanel>

      <RibbonPanel $w={98}>
        <PanelBody $pad={6}>
          <LargeTool $w={60}>
            <LargeIcon>
              <Glyph name="links" size={32} />
            </LargeIcon>
            <span>Manage</span>
            <span>Links</span>
          </LargeTool>
          <ToolGrid $cols={1} $cell={16}>
            <Glyph name="pictureDoc" />
            <Glyph name="pinDoc" />
            <Glyph name="frameDoc" />
          </ToolGrid>
        </PanelBody>
        <PanelLabel>Manage Project</PanelLabel>
      </RibbonPanel>

      <RibbonPanel $w={52}>
        <PanelBody>
          <LargeTool $w={52}>
            <LargeIcon>
              <Glyph name="phases" size={32} />
            </LargeIcon>
            <span>Phases</span>
          </LargeTool>
        </PanelBody>
        <PanelLabel>Phasing</PanelLabel>
      </RibbonPanel>

      <RibbonPanel $w={60}>
        <PanelBody>
          <ToolGrid $cols={1} $cell={60}>
            <Glyph name="selBox" />
            <Glyph name="selAdd" />
            <Glyph name="selEdit" />
          </ToolGrid>
        </PanelBody>
        <PanelLabel>Selection</PanelLabel>
      </RibbonPanel>

      <RibbonPanel $w={48}>
        <PanelBody>
          <ToolGrid $cols={1} $cell={48}>
            <Glyph name="bars" />
            <Glyph name="barsCursor" />
            <Glyph name="warnDoc" />
          </ToolGrid>
        </PanelBody>
        <PanelLabel>Inquiry</PanelLabel>
      </RibbonPanel>

      <RibbonPanel $w={51}>
        <PanelBody>
          <ToolGrid $cols={1} $cell={51} $top={14}>
            <Glyph name="scroll" />
            <Glyph name="shield" />
          </ToolGrid>
        </PanelBody>
        <PanelLabel>Macros</PanelLabel>
      </RibbonPanel>

      <RibbonPanel $w={123}>
        <PanelBody>
          <LargeTool $w={123}>
            <LargeIcon>
              <Glyph name="dynamo" size={32} />
            </LargeIcon>
            <span>Dynamo</span>
          </LargeTool>
        </PanelBody>
        <PanelLabel>Visual Programming</PanelLabel>
      </RibbonPanel>
    </Ribbon>

    <RibbonEdge />

    <QatBar>
      {qat.map((item, i) => (
        <QatSlot key={i} $w={item.w} $active={item.active}>
          {item.icon && <Glyph name={item.icon} size={item.active ? 18 : 17} color="#9c9c9c" />}
          {item.caret && <Caret $c="#666" />}
          {item.sep && <QatSeparator />}
          {item.letter && <Letter>A</Letter>}
        </QatSlot>
      ))}
    </QatBar>

    <GrayStrip />

    <WorkArea>
      <BrowserDock>
        <DockTitle>
          Project Browser - Project1
          <X size={13} color="#333" strokeWidth={3} />
        </DockTitle>
        <TreePane>
          <TreeLines viewBox="0 0 60 260">
            <path d="M9.5 14V234M9.5 142H18M9.5 160H18M9.5 178.5H18M9.5 197H18M9.5 215H18M9.5 234H18" />
            <path d="M25 20V105M25 32H38M25 50H38M25 105H38" />
            <path d="M42.5 57V87M42.5 68.5H54M42.5 87H54M42.5 112V123.5H54" />
          </TreeLines>
          {treeRows.map((row, i) => (
            <TreeRow key={i} $indent={row.indent}>
              {row.toggle && <Toggle $open={row.toggle === 'open'} $none={row.toggle === 'none'} />}
              {row.icon && (
                <TreeIcon>
                  <Glyph name={row.icon} size={14} color="#666" />
                </TreeIcon>
              )}
              <TreeText $left={row.left} $current={row.current}>
                {row.text}
              </TreeText>
            </TreeRow>
          ))}
        </TreePane>
      </BrowserDock>

      <PropertiesDock>
        <DockTitle>Properties</DockTitle>
        <TypeArea>
          <TypeThumb>
            <Glyph name="typePlan" size={34} color="#8a8a8a" />
          </TypeThumb>
          <TypeName>Floor Plan</TypeName>
        </TypeArea>
        <TypeSelectRow>
          <TypeSelect>
            Floor Plan: Level 1
            <Caret $c="#111" />
          </TypeSelect>
          <Glyph name="typeSwitch" size={15} />
        </TypeSelectRow>
        <PropBody>
          <PropTable>
            {props.map((p) =>
              'head' in p ? (
                <GroupHead key={p.head}>
                  {p.head}
                  {p.chevron && <ChevronsUp size={10} color="#444" strokeWidth={2.5} />}
                </GroupHead>
              ) : (
                <PropRow key={p.label} $muted={p.muted}>
                  <PropLabel>{p.label}</PropLabel>
                  <PropValue>
                    {p.value}
                    {p.button && <PropButton>{p.button}</PropButton>}
                    {p.check && <CheckBox />}
                  </PropValue>
                </PropRow>
              ),
            )}
          </PropTable>
          <PropScroll>
            <ScrollArrow />
          </PropScroll>
        </PropBody>
        <PropFooter>
          <HelpLink>Properties help</HelpLink>
          <ApplyButton>Apply</ApplyButton>
        </PropFooter>
      </PropertiesDock>

      <Canvas>
        <WallDrawing viewBox="0 0 762 526">
          <path d="M599 179H613V333H456V404H305V366H319V390H442V319H599Z" fill="#ff0000" />
        </WallDrawing>
        <ElevationMark />
        <ViewBar />
      </Canvas>
    </WorkArea>

    <FillDialog>
      <DialogTitle $dim>
        Fill Patterns
        <CloseButton>
          <X size={14} color="#5f6f7e" strokeWidth={2.4} />
        </CloseButton>
      </DialogTitle>
      <DialogFace>
        <FillColumn>
          <FieldLabel>Name:</FieldLabel>
          <PatternList>
            {patterns.map((name, i) => (
              <PatternItem key={name} $selected={i === 0}>
                {name}
              </PatternItem>
            ))}
          </PatternList>
          <PatternTypeBox $h={35}>
            <GroupLegend>Pattern Type</GroupLegend>
            <Radio />
            Drafting
          </PatternTypeBox>
        </FillColumn>
        <FillActions>
          <PushButton>New</PushButton>
          <PushButton>Edit...</PushButton>
          <PushButton>Delete</PushButton>
          <PushButton>Duplicate</PushButton>
          <HelpButton>Help</HelpButton>
        </FillActions>
        <Grip />
      </DialogFace>
    </FillDialog>

    <NewDialog>
      <DialogTitle>
        New Pattern
        <CloseButton $red>
          <X size={14} color="#fff" strokeWidth={3.4} />
        </CloseButton>
      </DialogTitle>
      <DialogFace>
        <NewColumn>
          <PreviewBox $h={159}>
            <GroupLegend>Preview</GroupLegend>
            <PatternPreview viewBox="0 0 177 102">
              <defs>
                <pattern id="hatch" width="3.6" height="102" patternUnits="userSpaceOnUse">
                  <rect width="1.6" height="102" fill="#666" />
                </pattern>
              </defs>
              <rect width="177" height="102" fill="#fff" />
              <rect width="90" height="102" fill="url(#hatch)" />
              <rect x="119" width="16" height="102" fill="url(#hatch)" />
              <rect x="164" width="13" height="102" fill="url(#hatch)" />
            </PatternPreview>
            <ScaleRow>
              <ScaleLabel>Scale:</ScaleLabel>
              <TextField $w={106} $disabled>
                1" = 1"
              </TextField>
            </ScaleRow>
          </PreviewBox>
          <OrientLabel>Orientation in Host Layers:</OrientLabel>
          <OrientSelect>
            Orient To View
            <Caret $c="#111" />
          </OrientSelect>
          <OrientMenu>
            <OrientOption>Orient To View</OrientOption>
            <OrientOption>Keep Readable</OrientOption>
            <OrientOption $selected>Align with element</OrientOption>
          </OrientMenu>
          <NameRow>
            <NameLabel>Name:</NameLabel>
            <TextField $w={121} $h={18}>
              2 Hour
            </TextField>
          </NameRow>
          <CustomBox $h={124}>
            <GroupLegend>Custom</GroupLegend>
            <ImportRow>
              <PushButton $w={71} $h={22}>
                Import...
              </PushButton>
              <ImportList>
                <ImportItem>2 Hour</ImportItem>
              </ImportList>
            </ImportRow>
            <UnitRow>
              File units are:
              <TextField $w={72} $disabled>
                inches
              </TextField>
            </UnitRow>
            <UnitRow>
              Import scale:
              <TextField $w={72}>1.00</TextField>
            </UnitRow>
          </CustomBox>
          <DialogActions>
            <PushButton $w={86} $default>
              OK
            </PushButton>
            <PushButton $w={86}>Cancel</PushButton>
          </DialogActions>
        </NewColumn>
        <Grip />
      </DialogFace>
    </NewDialog>

    <Highlight />
    <MouseCursor viewBox="0 0 13 19">
      <path d="M1 1v14l3.5-3 2.5 6 2.5-1-2.5-6H12z" fill="#fff" stroke="#333" />
    </MouseCursor>
    <Watermark>TheRevitGuys.com</Watermark>
  </Page>
);

export default App;
